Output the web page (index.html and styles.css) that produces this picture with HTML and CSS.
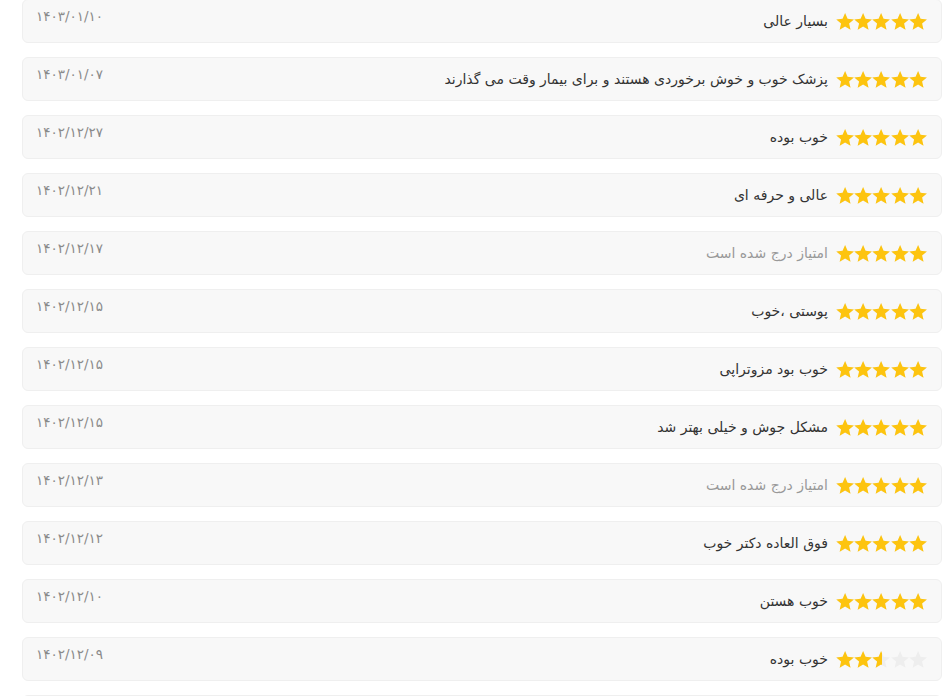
FILE: index.html
```html
<!DOCTYPE html>
<html lang="fa" dir="rtl">
    <head>
        <meta charset="UTF-8">
        <meta name="viewport" content="width=device-width, initial-scale=1.0">
        <title>نظرات بیماران</title>
        <link rel="stylesheet" href="styles.css">
    </head>

    <body>
        <svg width="0" height="0" class="defs">
            <symbol id="star" viewBox="2 2 20 19.3">
                <path d="M12 17.27L18.18 21l-1.64-7.03L22 9.24l-7.19-.61L12 2 9.19 8.63 2 9.24l5.46 4.73L5.82 21z" />
            </symbol>
        </svg>

        <div class="comments">
            <div class="comment">
                <div class="comment-body">
                    <div class="rate"><div class="rate-fill" style="width: 100%"></div></div>
                    <p class="text">بسیار عالی</p>
                </div>
                <span class="date">۱۴۰۳/۰۱/۱۰</span>
            </div>
            <div class="comment">
                <div class="comment-body">
                    <div class="rate"><div class="rate-fill" style="width: 100%"></div></div>
                    <p class="text">پزشک خوب و خوش برخوردی هستند و برای بیمار وقت می گذارند</p>
                </div>
                <span class="date">۱۴۰۳/۰۱/۰۷</span>
            </div>
            <div class="comment">
                <div class="comment-body">
                    <div class="rate"><div class="rate-fill" style="width: 100%"></div></div>
                    <p class="text">خوب بوده</p>
                </div>
                <span class="date">۱۴۰۲/۱۲/۲۷</span>
            </div>
            <div class="comment">
                <div class="comment-body">
                    <div class="rate"><div class="rate-fill" style="width: 100%"></div></div>
                    <p class="text">عالی و حرفه ای</p>
                </div>
                <span class="date">۱۴۰۲/۱۲/۲۱</span>
            </div>
            <div class="comment">
                <div class="comment-body">
                    <div class="rate"><div class="rate-fill" style="width: 100%"></div></div>
                    <p class="text empty">امتیاز درج شده است</p>
                </div>
                <span class="date">۱۴۰۲/۱۲/۱۷</span>
            </div>
            <div class="comment">
                <div class="comment-body">
                    <div class="rate"><div class="rate-fill" style="width: 100%"></div></div>
                    <p class="text">پوستی ،خوب</p>
                </div>
                <span class="date">۱۴۰۲/۱۲/۱۵</span>
            </div>
            <div class="comment">
                <div class="comment-body">
                    <div class="rate"><div class="rate-fill" style="width: 100%"></div></div>
                    <p class="text">خوب بود مزوتراپی</p>
                </div>
                <span class="date">۱۴۰۲/۱۲/۱۵</span>
            </div>
            <div class="comment">
                <div class="comment-body">
                    <div class="rate"><div class="rate-fill" style="width: 100%"></div></div>
                    <p class="text">مشکل جوش و خیلی بهتر شد</p>
                </div>
                <span class="date">۱۴۰۲/۱۲/۱۵</span>
            </div>
            <div class="comment">
                <div class="comment-body">
                    <div class="rate"><div class="rate-fill" style="width: 100%"></div></div>
                    <p class="text empty">امتیاز درج شده است</p>
                </div>
                <span class="date">۱۴۰۲/۱۲/۱۳</span>
            </div>
            <div class="comment">
                <div class="comment-body">
                    <div class="rate"><div class="rate-fill" style="width: 100%"></div></div>
                    <p class="text">فوق العاده دکتر خوب</p>
                </div>
                <span class="date">۱۴۰۲/۱۲/۱۲</span>
            </div>
            <div class="comment">
                <div class="comment-body">
                    <div class="rate"><div class="rate-fill" style="width: 100%"></div></div>
                    <p class="text">خوب هستن</p>
                </div>
                <span class="date">۱۴۰۲/۱۲/۱۰</span>
            </div>
            <div class="comment">
                <div class="comment-body">
                    <div class="rate"><div class="rate-fill" style="width: 50%"></div></div>
                    <p class="text">خوب بوده</p>
                </div>
                <span class="date">۱۴۰۲/۱۲/۰۹</span>
            </div>
            <div class="comment"></div>
        </div>

        <script>
            // هر امتیاز ۵ ستاره دارد: یک ردیف خاکستری و یک ردیف زرد روی آن
            const starSvg = '<svg><use href="#star"></use></svg>';
            document.querySelectorAll('.rate').forEach(rate => {
                const fill = rate.querySelector('.rate-fill');
                rate.insertAdjacentHTML('afterbegin', starSvg.repeat(5));
                fill.innerHTML = '<div class="rate-stars">' + starSvg.repeat(5) + '</div>';
            });
        </script>
    </body>

</html>
```

FILE: styles.css
```css
* {
    margin: 0;
    padding: 0;
    box-sizing: border-box;
    font-family: 'DejaVu Sans', sans-serif;
}

body {
    background: #fff;
    color: #333;
}

.defs {
    position: absolute;
}

.comments {
    display: flex;
    flex-direction: column;
    gap: 14px;
    width: 920px;
    margin: -1px 2px 0 22px;
}

.comment {
    display: flex;
    flex: none;
    justify-content: space-between;
    align-items: flex-start;
    height: 44px;
    padding: 0 14px 0 13px;
    background: #f8f8f8;
    border: 1px solid #efefef;
    border-radius: 6px;

    & .comment-body {
        display: flex;
        align-items: center;
        gap: 8px;
        height: 100%;
    }

    & .text {
        font-size: 14px;
        color: #333;
    }

    & .text.empty {
        color: #999;
    }

    & .date {
        font-size: 13.5px;
        color: #8a8a8a;
        padding-top: 8px;
        direction: ltr;
    }
}

.rate {
    --star: 18.2px;
    position: relative;
    display: flex;
    direction: ltr;
    width: calc(var(--star) * 5);

    & svg {
        flex: none;
        width: var(--star);
        height: 17px;
        fill: #eeeeee;
    }

    & .rate-fill {
        position: absolute;
        top: 0;
        left: 0;
        height: 100%;
        overflow: hidden;

        & .rate-stars {
            display: flex;
            width: calc(var(--star) * 5);
        }

        & svg {
            fill: #fdc40f;
        }
    }
}
```
